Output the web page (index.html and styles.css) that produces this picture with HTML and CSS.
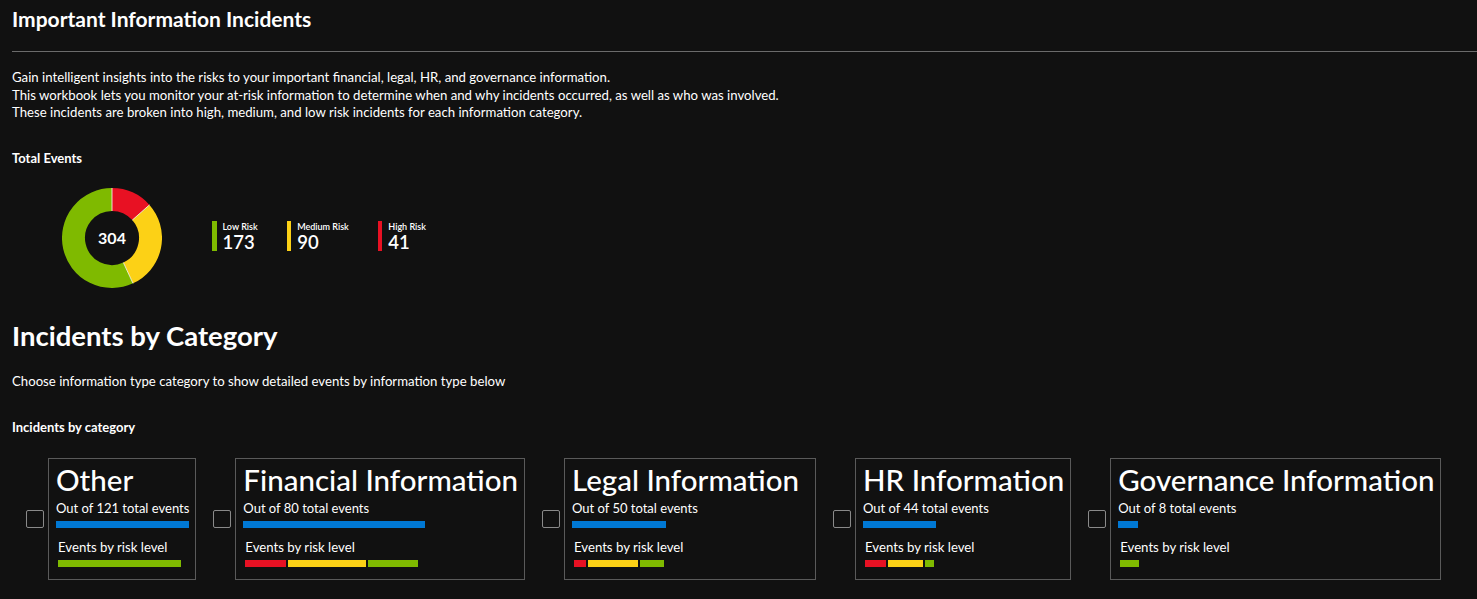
FILE: index.html
```html
<!DOCTYPE html>
<html>
<head>
<meta charset="utf-8">
<link rel="stylesheet" href="styles.css">
</head>
<body>
<div class="page">
  <h1 class="title">Important Information Incidents</h1>
  <hr class="rule">
  <div class="intro">
    <p>Gain intelligent insights into the risks to your important financial, legal, HR, and governance information.</p>
    <p>This workbook lets you monitor your at-risk information to determine when and why incidents occurred, as well as who was involved.</p>
    <p>These incidents are broken into high, medium, and low risk incidents for each information category.</p>
  </div>

  <h3 class="label total-label">Total Events</h3>
  <div class="summary">
    <div class="donut">
      <svg width="100" height="100" viewBox="0 0 100 100">
        <path d="M66.19 84.93 A38.5 38.5 0 1 1 50 11.5" fill="none" stroke="#7fba00" stroke-width="23"/>
        <path d="M50 11.5 A38.5 38.5 0 0 1 78.85 24.51" fill="none" stroke="#e81123" stroke-width="23"/>
        <path d="M78.85 24.51 A38.5 38.5 0 0 1 66.19 84.93" fill="none" stroke="#fcd116" stroke-width="23"/>
        <line x1="50" y1="23" x2="50" y2="0" stroke="#fff" stroke-width="0.8"/>
        <line x1="70.23" y1="32.12" x2="87.47" y2="16.89" stroke="#fff" stroke-width="0.8"/>
        <line x1="61.35" y1="74.5" x2="71.03" y2="95.37" stroke="#fff" stroke-width="0.8"/>
      </svg>
      <span class="donut-value">304</span>
    </div>
    <div class="legend">
      <div class="legend-item">
        <span class="legend-bar green"></span>
        <div class="legend-text"><span class="legend-name">Low Risk</span><span class="legend-num">173</span></div>
      </div>
      <div class="legend-item">
        <span class="legend-bar yellow"></span>
        <div class="legend-text"><span class="legend-name">Medium Risk</span><span class="legend-num">90</span></div>
      </div>
      <div class="legend-item">
        <span class="legend-bar red"></span>
        <div class="legend-text"><span class="legend-name">High Risk</span><span class="legend-num">41</span></div>
      </div>
    </div>
  </div>

  <h2 class="section">Incidents by Category</h2>
  <p class="choose">Choose information type category to show detailed events by information type below</p>
  <h3 class="label cat-label">Incidents by category</h3>

  <div class="cards">
    <div class="item">
      <span class="check"></span>
      <div class="card">
        <div class="card-title">Other</div>
        <div class="card-sub">Out of 121 total events</div>
        <div class="blue-bar" style="width:100%"></div>
        <div class="risk-label">Events by risk level</div>
        <div class="risk-bar" style="width:92%">
          <span class="seg green" style="flex-grow:121"></span>
        </div>
      </div>
    </div>
    <div class="item">
      <span class="check"></span>
      <div class="card">
        <div class="card-title">Financial Information</div>
        <div class="card-sub">Out of 80 total events</div>
        <div class="blue-bar" style="width:66.1%"></div>
        <div class="risk-label">Events by risk level</div>
        <div class="risk-bar" style="width:63%">
          <span class="seg red" style="flex-grow:42"></span>
          <span class="seg yellow" style="flex-grow:80"></span>
          <span class="seg green" style="flex-grow:52"></span>
        </div>
      </div>
    </div>
    <div class="item">
      <span class="check"></span>
      <div class="card card-legal">
        <div class="card-title">Legal Information</div>
        <div class="card-sub">Out of 50 total events</div>
        <div class="blue-bar" style="width:41.3%"></div>
        <div class="risk-label">Events by risk level</div>
        <div class="risk-bar" style="width:39.5%">
          <span class="seg red" style="flex-grow:13"></span>
          <span class="seg yellow" style="flex-grow:52"></span>
          <span class="seg green" style="flex-grow:25"></span>
        </div>
      </div>
    </div>
    <div class="item">
      <span class="check"></span>
      <div class="card">
        <div class="card-title">HR Information</div>
        <div class="card-sub">Out of 44 total events</div>
        <div class="blue-bar" style="width:36.4%"></div>
        <div class="risk-label">Events by risk level</div>
        <div class="risk-bar" style="width:34.5%">
          <span class="seg red" style="flex-grow:21"></span>
          <span class="seg yellow" style="flex-grow:35"></span>
          <span class="seg green" style="flex-grow:9"></span>
        </div>
      </div>
    </div>
    <div class="item">
      <span class="check"></span>
      <div class="card">
        <div class="card-title">Governance Information</div>
        <div class="card-sub">Out of 8 total events</div>
        <div class="blue-bar" style="width:6.3%"></div>
        <div class="risk-label">Events by risk level</div>
        <div class="risk-bar" style="width:6%">
          <span class="seg green" style="flex-grow:8"></span>
        </div>
      </div>
    </div>
  </div>
</div>
</body>
</html>
```

FILE: styles.css
```css
html, body {
  margin: 0;
  padding: 0;
  background: #111111;
  color: #ffffff;
  font-family: "Lato", "Segoe UI", sans-serif;
}

.page {
  padding: 0 0 0 12px;
}

.title {
  margin: 0;
  padding-top: 5px;
  font-size: 21px;
  line-height: 27px;
  font-weight: 700;
}

.rule {
  margin: 19px 0 0 0;
  border: 0;
  border-top: 1px solid #6b6b6b;
  height: 0;
}

.intro {
  margin-top: 17px;
  font-size: 13.2px;
  line-height: 17.5px;
}

.intro p {
  margin: 0;
}

.label {
  margin: 0;
  font-size: 13px;
  font-weight: 700;
  line-height: 18px;
}

.total-label {
  margin-top: 27px;
}

.summary {
  display: flex;
  align-items: flex-start;
  margin-top: 21px;
  padding-left: 50px;
}

.donut {
  position: relative;
  width: 100px;
  height: 100px;
}

.donut svg {
  display: block;
}

.donut-value {
  position: absolute;
  left: 0;
  top: 0;
  width: 100px;
  height: 100px;
  display: flex;
  align-items: center;
  justify-content: center;
  font-size: 16px;
  font-weight: 700;
}

.legend {
  display: flex;
  gap: 29px;
  margin-left: 50px;
  margin-top: 33px;
}

.legend-item {
  display: flex;
  gap: 6px;
  align-items: flex-start;
}

.legend-bar {
  width: 4.5px;
  height: 30px;
}

.legend-text {
  display: flex;
  flex-direction: column;
}

.legend-name {
  font-size: 9px;
  line-height: 12px;
  font-weight: 600;
}

.legend-num {
  font-size: 18.5px;
  line-height: 19px;
  font-weight: 600;
}

.green { background: #7fba00; }
.yellow { background: #fcd116; }
.red { background: #e81123; }

.section {
  margin: 31px 0 0 0;
  font-size: 27.5px;
  line-height: 34px;
  font-weight: 700;
}

.choose {
  margin: 19px 0 0 0;
  font-size: 13.2px;
  line-height: 18px;
}

.cat-label {
  margin-top: 28px;
}

.cards {
  display: flex;
  align-items: center;
  gap: 17px;
  margin-top: 22px;
  padding-left: 14px;
}

.item {
  display: flex;
  align-items: center;
  gap: 4px;
}

.check {
  width: 16px;
  height: 16px;
  border: 1px solid #8a8a8a;
  border-radius: 2px;
}

.card {
  border: 1px solid #5a5a5a;
  height: 120px;
  box-sizing: content-box;
  padding: 0 6px 0 7px;
  display: flex;
  flex-direction: column;
}

.card-legal {
  padding-right: 16px;
}

.card-title {
  font-size: 29.5px;
  line-height: 32px;
  margin-top: 5px;
  font-weight: 500;
  white-space: nowrap;
}

.card-sub {
  font-size: 13px;
  line-height: 17px;
  margin-top: 4px;
  white-space: nowrap;
}

.blue-bar {
  height: 7px;
  background: #0078d4;
  margin-top: 4px;
}

.risk-label {
  font-size: 13.2px;
  line-height: 17px;
  margin-top: 11px;
  margin-left: 2px;
  white-space: nowrap;
}

.risk-bar {
  display: flex;
  gap: 2px;
  height: 7px;
  margin-top: 4px;
  margin-left: 2px;
}

.seg {
  display: block;
  height: 7px;
  flex-basis: 0;
}
```
